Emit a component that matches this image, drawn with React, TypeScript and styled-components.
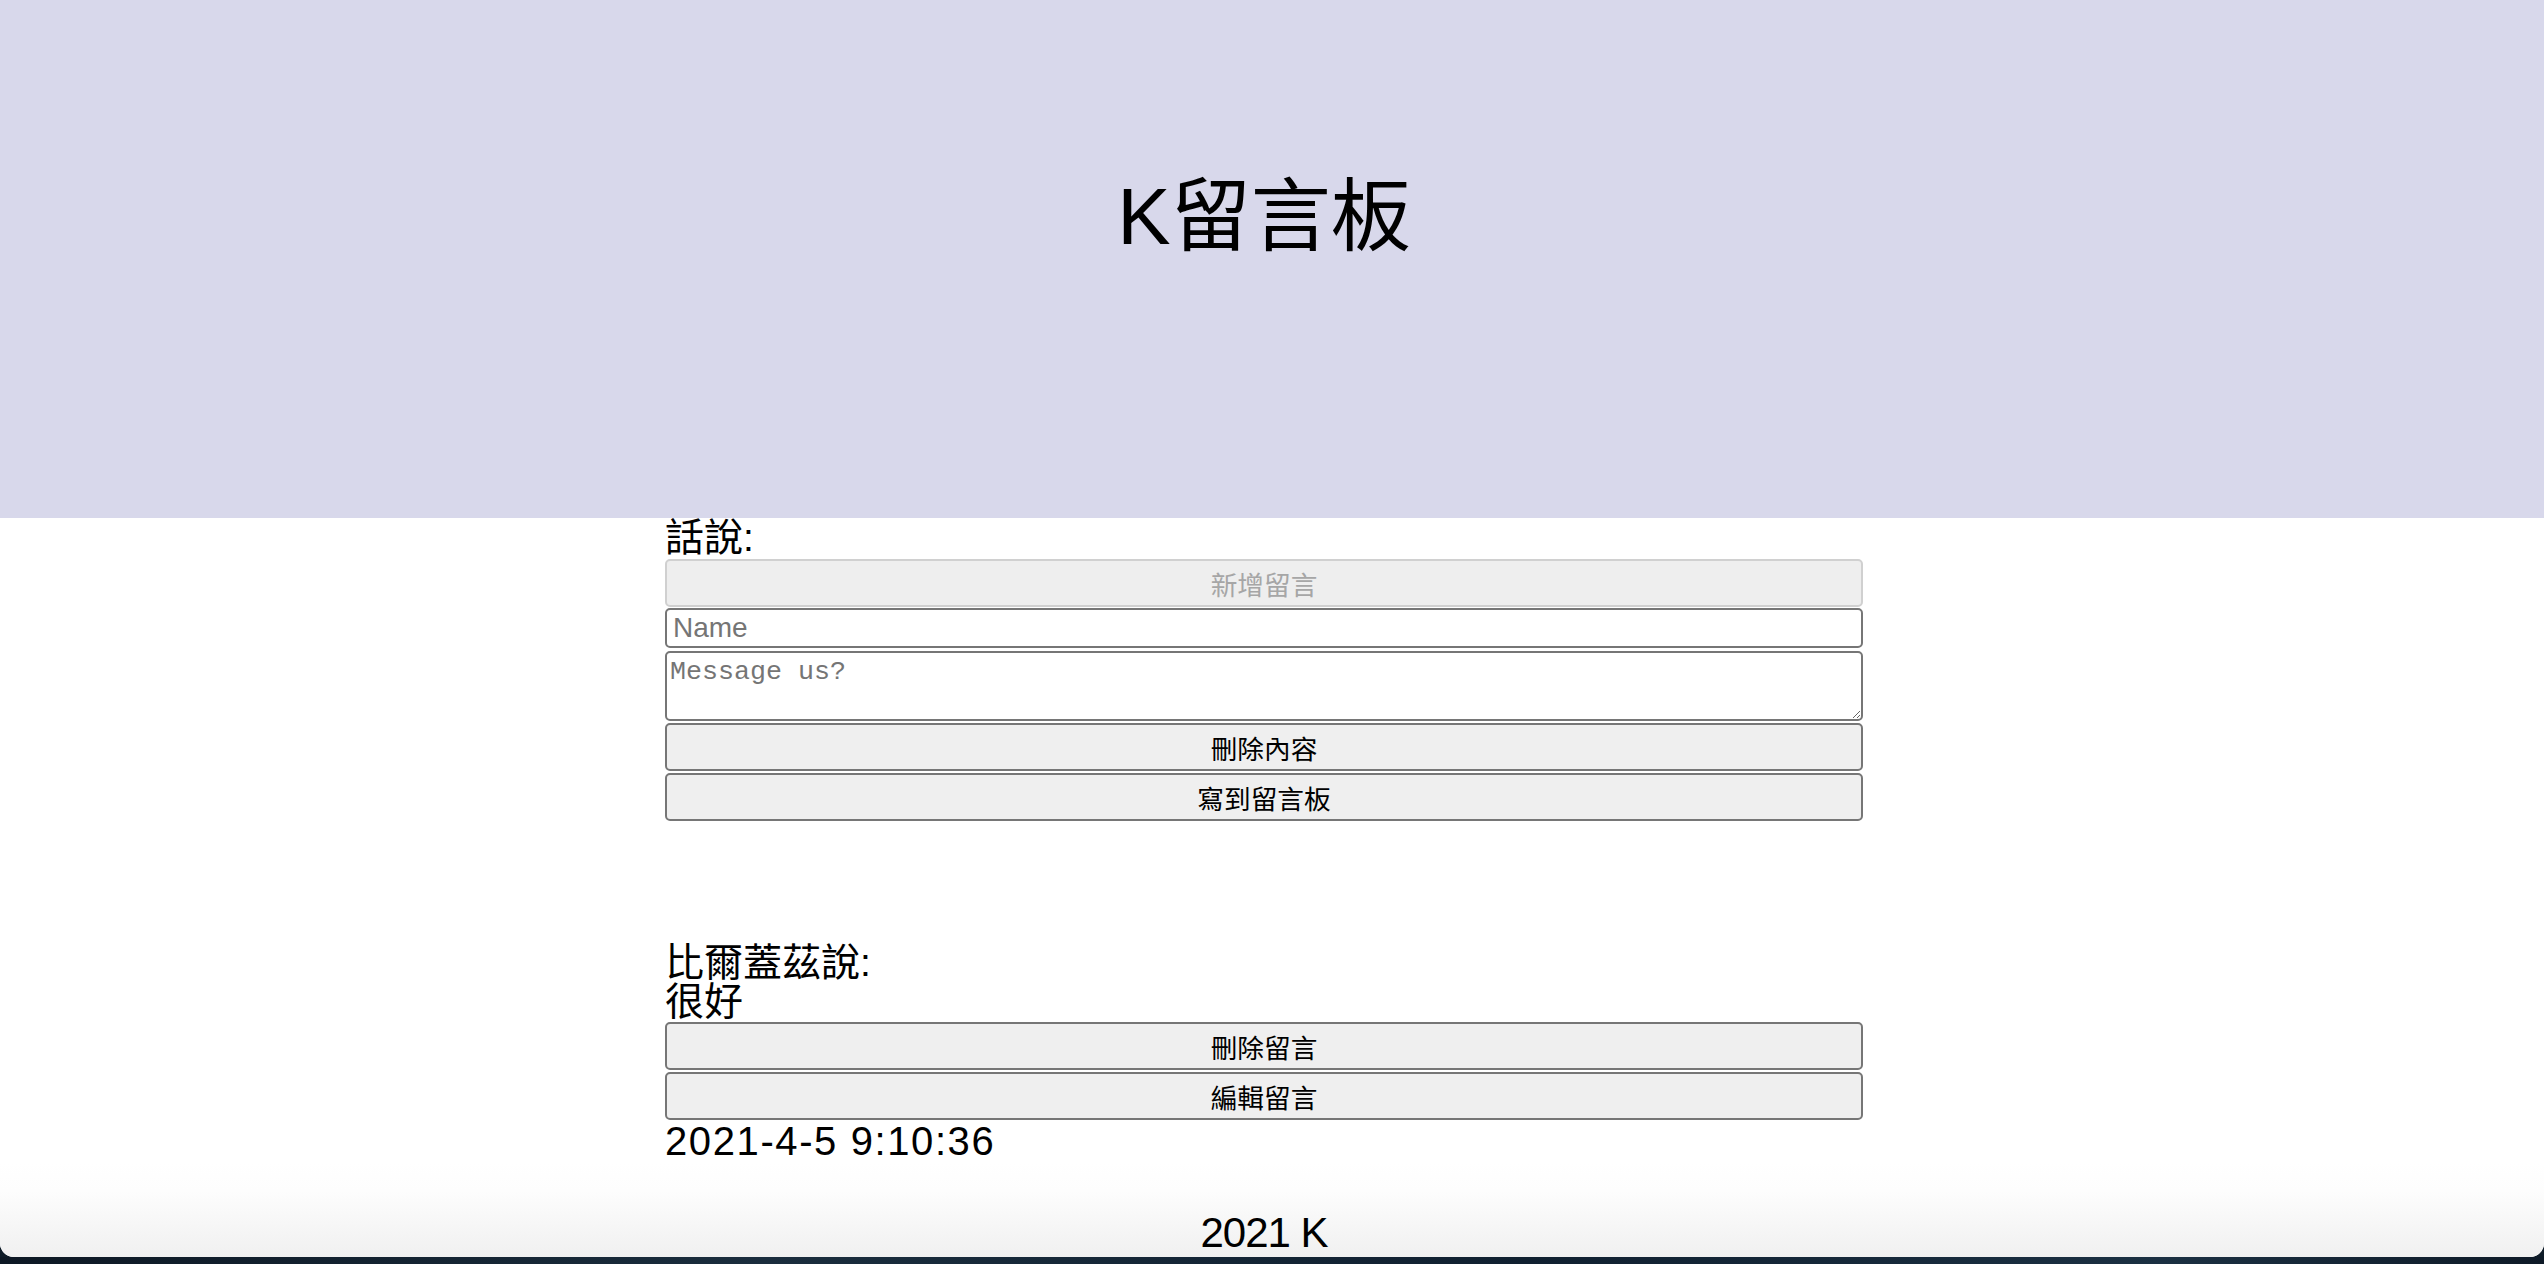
import React from "react";
import styled, { createGlobalStyle } from "styled-components";

const Global = createGlobalStyle`
  html, body { margin: 0; padding: 0; background: #ffffff; }
  body {
    font-family: "Liberation Sans", "Noto Sans CJK TC", sans-serif;
    color: #000;
  }
  * { box-sizing: border-box; }
`;

const Page = styled.div`
  display: flex;
  flex-direction: column;
  height: 1264px;
  overflow: hidden;
  background: #0f1c28;
`;

const Sheet = styled.div`
  flex: 1;
  display: flex;
  flex-direction: column;
  background: #ffffff;
  border-radius: 0 0 14px 14px;
  overflow: hidden;
`;

const Header = styled.header`
  height: 518px;
  flex-shrink: 0;
  background: #d8d8eb;
  padding: 171px 16px 0 0;
  display: flex;
  justify-content: center;
  align-items: flex-start;
`;

const Title = styled.h1`
  margin: 0;
  font-size: 80px;
  line-height: 92px;
  font-weight: 400;
  font-family: "Liberation Sans", "Noto Sans CJK TC", sans-serif;
`;

const Body = styled.main`
  flex: 1;
  display: flex;
  justify-content: center;
  padding-right: 16px;
`;

const Column = styled.div`
  width: 1198px;
  display: flex;
  flex-direction: column;
`;

const Section = styled.section<{ $top?: number }>`
  display: flex;
  flex-direction: column;
  margin-top: ${(p) => p.$top ?? 0}px;
`;

const Big = styled.div<{ $lh?: number }>`
  font-size: 39px;
  line-height: ${(p) => p.$lh ?? 40}px;
  font-family: "Liberation Sans", "Noto Sans CJK TC", sans-serif;
`;

const Stamp = styled.div`
  font-size: 40px;
  line-height: 42px;
  letter-spacing: 1.6px;
  font-family: "Liberation Sans", sans-serif;
`;

const Button = styled.button<{ $mt?: number }>`
  display: block;
  width: 100%;
  height: 48px;
  margin: ${(p) => p.$mt ?? 2}px 0 0;
  padding: 0 12px;
  font-family: "Liberation Sans", "Noto Sans CJK TC", sans-serif;
  font-size: 26.67px;
  color: #000;
  background: #efefef;
  border: 2px solid #767676;
  border-radius: 5px;
  &:disabled {
    color: #a6a6a6;
    background: #eeeeee;
    border-color: #d0d0d0;
  }
`;

const NameInput = styled.input`
  display: block;
  width: 100%;
  height: 40px;
  margin: 1px 0 0;
  padding: 0 6px;
  font-family: "Liberation Sans", "Noto Sans CJK TC", sans-serif;
  font-size: 28px;
  border: 2px solid #767676;
  border-radius: 5px;
  background: #fff;
  &::placeholder { color: #757575; }
`;

const MessageArea = styled.textarea`
  display: block;
  width: 100%;
  height: 70px;
  margin: 3px 0 0;
  padding: 4px 3px;
  font-family: "Liberation Mono", monospace;
  font-size: 26.67px;
  border: 2px solid #767676;
  border-radius: 5px;
  background: #fff;
  resize: both;
  &::placeholder { color: #757575; }
`;

const Footer = styled.footer`
  height: 96px;
  flex-shrink: 0;
  display: flex;
  justify-content: center;
  align-items: flex-end;
  padding: 0 16px 3px 0;
  background: linear-gradient(to bottom, #ffffff 0%, #fdfdfd 30%, #f0f0f0 100%);
`;

const FooterText = styled.div`
  font-size: 42px;
  line-height: 44px;
  letter-spacing: -1px;
  font-family: "Liberation Sans", sans-serif;
`;

const Desk = styled.div`
  height: 7px;
  flex-shrink: 0;
  background: linear-gradient(90deg, #0d1824 0%, #1a2d3d 30%, #102030 60%, #1b3042 85%, #0e1a27 100%);
`;

export default function App() {
  return (
    <>
      <Global />
      <Page>
        <Sheet>
          <Header>
            <Title>K留言板</Title>
          </Header>
          <Body>
            <Column>
              <Section>
                <Big>話說:</Big>
                <Button $mt={1} disabled>新增留言</Button>
                <NameInput placeholder="Name" />
                <MessageArea placeholder="Message us?" />
                <Button>刪除內容</Button>
                <Button>寫到留言板</Button>
              </Section>
              <Section $top={122}>
                <Big $lh={39}>比爾蓋茲說:</Big>
                <Big $lh={39}>很好</Big>
                <Button $mt={1}>刪除留言</Button>
                <Button>編輯留言</Button>
                <Stamp>2021-4-5 9:10:36</Stamp>
              </Section>
            </Column>
          </Body>
          <Footer>
            <FooterText>2021 K</FooterText>
          </Footer>
        </Sheet>
        <Desk />
      </Page>
    </>
  );
}
